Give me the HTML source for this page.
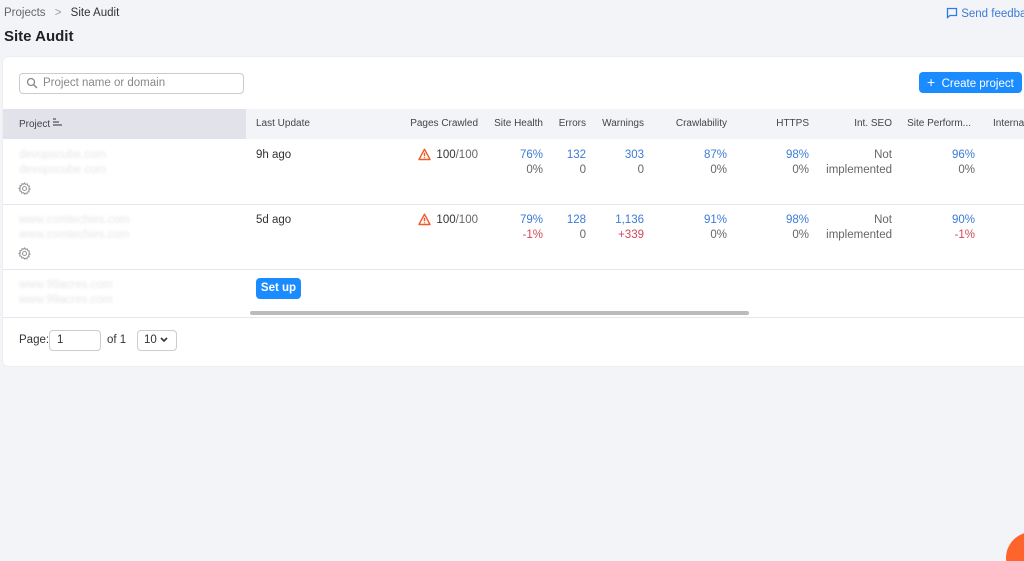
<!DOCTYPE html>
<html style="overflow:hidden;height:561px"><head><style>
body{margin:0;width:1024px;height:561px;background:#f3f4f8;font-family:"Liberation Sans",sans-serif;color:#333;position:relative;overflow:hidden}
.a{position:absolute;white-space:nowrap}
.card{position:absolute;left:3px;top:57px;width:1030px;height:309px;background:#fff;border-radius:5px;box-shadow:0 0 1px #ccc}
.h{font-size:10px;color:#444;top:118px}
.v{font-size:11.5px;text-align:right}
.b{color:#3c7bd6}
.r{color:#d2485a}
.g{color:#666}
.blur{color:#e6e6e6;filter:blur(1.4px);font-size:11.5px}
.line{position:absolute;left:3px;width:1030px;height:1px;background:#e6e7ec}
</style></head><body>
<div class="a" style="left:4px;top:7px;font-size:11.5px;color:#666">Projects <span style="margin:0 6px;color:#999">&gt;</span> <span style="color:#333">Site Audit</span></div>
<div class="a" style="left:4px;top:28px;font-size:15px;font-weight:bold;color:#222">Site Audit</div>
<div class="a" style="left:946px;top:7px;font-size:11.5px;color:#3c7bd6"><svg width="12" height="12" viewBox="0 0 12 12" style="vertical-align:-2px"><path d="M1.5 1.5h9v7H4l-2.5 2z" fill="none" stroke="#2f7be0" stroke-width="1.3"/></svg> Send feedback</div>
<div class="card"></div>
<div class="a" style="left:19px;top:73px;width:223px;height:19px;border:1px solid #ccc;border-radius:4px;background:#fff"></div>
<svg class="a" style="left:26px;top:77px" width="12" height="12" viewBox="0 0 12 12"><circle cx="5" cy="5" r="3.5" fill="none" stroke="#888" stroke-width="1.3"/><path d="M7.5 7.5L11 11" stroke="#888" stroke-width="1.4"/></svg>
<div class="a" style="left:43px;top:77px;font-size:11.5px;color:#888">Project name or domain</div>
<div class="a" style="left:919px;top:72px;width:103px;height:21px;background:#1a8cff;border-radius:4px;color:#fff;font-size:11.5px;line-height:21px;text-indent:8px"><b style="font-size:14px;font-weight:normal">+</b>&nbsp; Create project</div>
<div class="a" style="left:3px;top:109px;width:1030px;height:30px;background:#f3f4f8"></div>
<div class="a" style="left:3px;top:109px;width:243px;height:30px;background:#e1e2ea"></div>
<div class="a h" style="left:19px">Project <svg width="10" height="9" viewBox="0 0 10 9"><path d="M0 1h3M0 4h6M0 7h9" stroke="#555" stroke-width="1.2"/></svg></div>
<div class="a h" style="left:256px">Last Update</div>
<div class="a h" style="right:546px">Pages Crawled</div>
<div class="a h" style="right:481px">Site Health</div>
<div class="a h" style="right:438px">Errors</div>
<div class="a h" style="right:380px">Warnings</div>
<div class="a h" style="right:297px">Crawlability</div>
<div class="a h" style="right:215px">HTTPS</div>
<div class="a h" style="right:132px">Int. SEO</div>
<div class="a h" style="right:53px">Site Perform...</div>
<div class="a h" style="left:993px">Internal</div>
<div class="line" style="top:204px"></div><div class="line" style="top:269px"></div><div class="line" style="top:317px"></div>
<div class="a" style="left:250px;top:311px;width:499px;height:4px;background:#bbb;border-radius:2px"></div>
<svg width="0" height="0" style="position:absolute"><defs>
<g id="gear"><circle cx="6.5" cy="6.5" r="2" fill="none" stroke="#999" stroke-width="1.1"/><path d="M6.5 1l1.1 1.4 1.7-.5.4 1.7 1.7.5-.5 1.7L12 7l-1.4 1 .5 1.7-1.7.4-.5 1.7-1.7-.5L6.5 12l-1-1.4-1.7.5-.4-1.7-1.7-.5.5-1.7L1 6.5 2.4 5.5 1.9 3.8l1.7-.4.5-1.7 1.7.5z" fill="none" stroke="#999" stroke-width="1.1"/></g>
<g id="warn"><path d="M6.5 1.2L12 11.5H1z" fill="none" stroke="#f05a28" stroke-width="1.4" stroke-linejoin="round"/><path d="M6.5 4.8v3.4M6.5 9.2v1" stroke="#f05a28" stroke-width="1.4"/></g>
</defs></svg>
<!-- row1 -->
<div class="a blur" style="left:19px;top:149px">devopscube.com</div><div class="a blur" style="left:19px;top:164px">devopscube.com</div>
<svg class="a" style="left:18px;top:182px" width="13" height="13"><use href="#gear"/></svg>
<div class="a" style="left:256px;top:149px;font-size:11.5px">9h ago</div>
<svg class="a" style="left:418px;top:148px" width="13" height="13"><use href="#warn"/></svg>
<div class="a v" style="right:546px;top:149px">100<span class="g">/100</span></div>
<div class="a v b" style="right:481px;top:149px">76%</div><div class="a v g" style="right:481px;top:164px">0%</div>
<div class="a v b" style="right:438px;top:149px">132</div><div class="a v g" style="right:438px;top:164px">0</div>
<div class="a v b" style="right:380px;top:149px">303</div><div class="a v g" style="right:380px;top:164px">0</div>
<div class="a v b" style="right:297px;top:149px">87%</div><div class="a v g" style="right:297px;top:164px">0%</div>
<div class="a v b" style="right:215px;top:149px">98%</div><div class="a v g" style="right:215px;top:164px">0%</div>
<div class="a v g" style="right:132px;top:149px">Not</div><div class="a v g" style="right:132px;top:164px">implemented</div>
<div class="a v b" style="right:49px;top:149px">96%</div><div class="a v g" style="right:49px;top:164px">0%</div>
<!-- row2 -->
<div class="a blur" style="left:19px;top:214px">www.comtechies.com</div><div class="a blur" style="left:19px;top:229px">www.comtechies.com</div>
<svg class="a" style="left:18px;top:247px" width="13" height="13"><use href="#gear"/></svg>
<div class="a" style="left:256px;top:214px;font-size:11.5px">5d ago</div>
<svg class="a" style="left:418px;top:213px" width="13" height="13"><use href="#warn"/></svg>
<div class="a v" style="right:546px;top:214px">100<span class="g">/100</span></div>
<div class="a v b" style="right:481px;top:214px">79%</div><div class="a v r" style="right:481px;top:229px">-1%</div>
<div class="a v b" style="right:438px;top:214px">128</div><div class="a v g" style="right:438px;top:229px">0</div>
<div class="a v b" style="right:380px;top:214px">1,136</div><div class="a v r" style="right:380px;top:229px">+339</div>
<div class="a v b" style="right:297px;top:214px">91%</div><div class="a v g" style="right:297px;top:229px">0%</div>
<div class="a v b" style="right:215px;top:214px">98%</div><div class="a v g" style="right:215px;top:229px">0%</div>
<div class="a v g" style="right:132px;top:214px">Not</div><div class="a v g" style="right:132px;top:229px">implemented</div>
<div class="a v b" style="right:49px;top:214px">90%</div><div class="a v r" style="right:49px;top:229px">-1%</div>
<!-- row3 -->
<div class="a blur" style="left:19px;top:279px">www.99acres.com</div><div class="a blur" style="left:19px;top:294px">www.99acres.com</div>
<div class="a" style="left:256px;top:278px;width:45px;height:21px;background:#1a8cff;border-radius:4px;color:#fff;font-size:11.5px;font-weight:bold;line-height:21px;text-align:center">Set up</div>
<!-- pagination -->
<div class="a" style="left:19px;top:334px;font-size:11.5px">Page:</div>
<div class="a" style="left:49px;top:330px;width:50px;height:19px;border:1px solid #ccc;border-radius:4px;font-size:11.5px;line-height:19px;text-indent:7px">1</div>
<div class="a" style="left:107px;top:334px;font-size:11.5px">of 1</div>
<div class="a" style="left:137px;top:330px;width:38px;height:19px;border:1px solid #ccc;border-radius:4px;font-size:11.5px;line-height:19px;text-indent:6px">10 <svg width="8" height="6" viewBox="0 0 8 6"><path d="M1 1l3 3 3-3" fill="none" stroke="#333" stroke-width="1.6"/></svg></div>
<div class="a" style="left:1006px;top:532px;width:52px;height:52px;border-radius:50%;background:#ff642d"></div>
</body></html>
